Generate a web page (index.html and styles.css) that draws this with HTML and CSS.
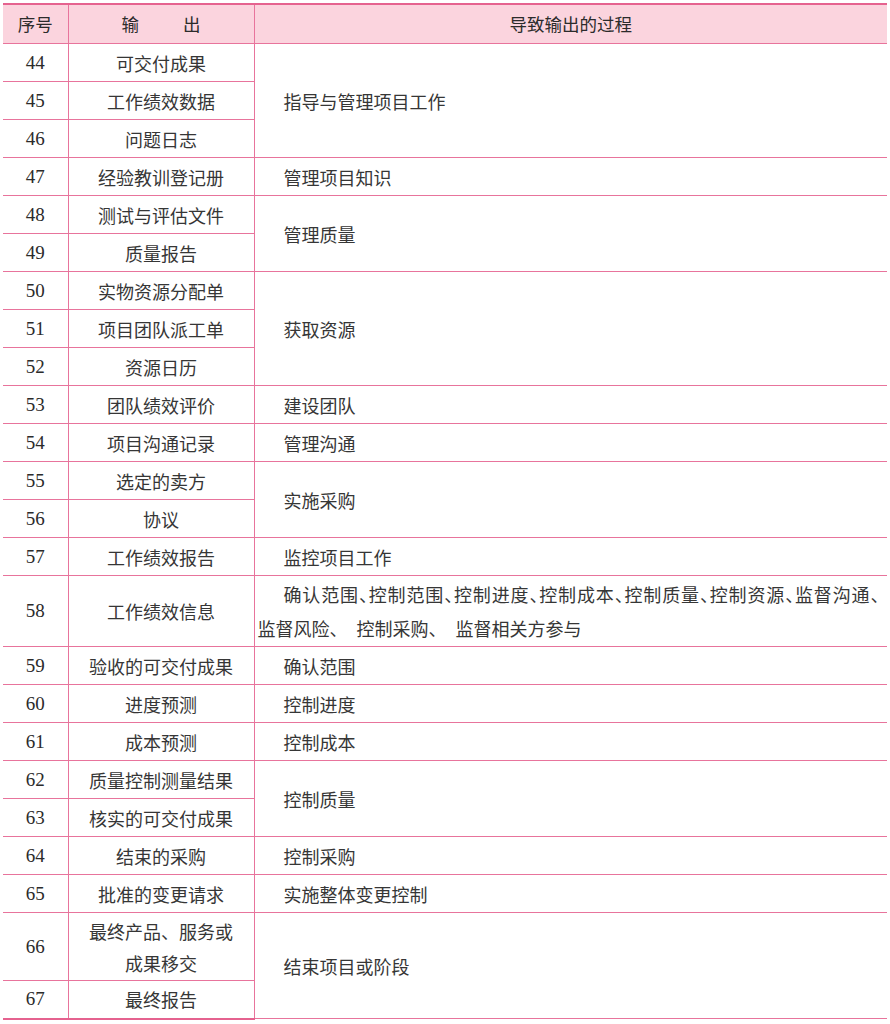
FILE: index.html
```html
<!DOCTYPE html>
<html lang="zh-CN">
<head>
<meta charset="utf-8">
<title>输出与过程</title>
<link rel="stylesheet" href="styles.css">
</head>
<body>
<table class="tbl">
  <colgroup>
    <col class="c1"><col class="c2"><col class="c3">
  </colgroup>
  <thead>
    <tr class="head">
      <th class="num-h">序号</th>
      <th><span class="sp">输</span>出</th>
      <th>导致输出的过程</th>
    </tr>
  </thead>
  <tbody>
    <tr><td class="n">44</td><td class="o">可交付成果</td><td class="p" rowspan="3">指导与管理项目工作</td></tr>
    <tr><td class="n">45</td><td class="o">工作绩效数据</td></tr>
    <tr><td class="n">46</td><td class="o">问题日志</td></tr>
    <tr><td class="n">47</td><td class="o">经验教训登记册</td><td class="p">管理项目知识</td></tr>
    <tr><td class="n">48</td><td class="o">测试与评估文件</td><td class="p" rowspan="2">管理质量</td></tr>
    <tr><td class="n">49</td><td class="o">质量报告</td></tr>
    <tr><td class="n">50</td><td class="o">实物资源分配单</td><td class="p" rowspan="3">获取资源</td></tr>
    <tr><td class="n">51</td><td class="o">项目团队派工单</td></tr>
    <tr><td class="n">52</td><td class="o">资源日历</td></tr>
    <tr><td class="n">53</td><td class="o">团队绩效评价</td><td class="p">建设团队</td></tr>
    <tr><td class="n">54</td><td class="o">项目沟通记录</td><td class="p">管理沟通</td></tr>
    <tr><td class="n">55</td><td class="o">选定的卖方</td><td class="p" rowspan="2">实施采购</td></tr>
    <tr><td class="n">56</td><td class="o">协议</td></tr>
    <tr><td class="n">57</td><td class="o">工作绩效报告</td><td class="p">监控项目工作</td></tr>
    <tr class="tall"><td class="n">58</td><td class="o">工作绩效信息</td><td class="p multi"><span class="halt">确认范围、控制范围、控制进度、控制成本、控制质量、控制资源、监督沟通</span>、<br>监督风险、&#8194;控制采购、&#8194;监督相关方参与</td></tr>
    <tr><td class="n">59</td><td class="o">验收的可交付成果</td><td class="p">确认范围</td></tr>
    <tr><td class="n">60</td><td class="o">进度预测</td><td class="p">控制进度</td></tr>
    <tr><td class="n">61</td><td class="o">成本预测</td><td class="p">控制成本</td></tr>
    <tr><td class="n">62</td><td class="o">质量控制测量结果</td><td class="p" rowspan="2">控制质量</td></tr>
    <tr><td class="n">63</td><td class="o">核实的可交付成果</td></tr>
    <tr><td class="n">64</td><td class="o">结束的采购</td><td class="p">控制采购</td></tr>
    <tr><td class="n">65</td><td class="o">批准的变更请求</td><td class="p">实施整体变更控制</td></tr>
    <tr class="tall2"><td class="n">66</td><td class="o two">最终产品、服务或<br>成果移交</td><td class="p" rowspan="2">结束项目或阶段</td></tr>
    <tr class="last"><td class="n">67</td><td class="o">最终报告</td></tr>
  </tbody>
</table>
</body>
</html>
```

FILE: styles.css
```css
html, body {
  margin: 0;
  padding: 0;
  background: #ffffff;
}

body {
  padding: 3px 3px 0 3px;
  font-family: "Noto Sans CJK SC", "Noto Sans", sans-serif;
  color: #363636;
}

.tbl {
  width: 884px;
  border-collapse: collapse;
  table-layout: fixed;
}

.c1 { width: 65px; }
.c2 { width: 186px; }
.c3 { width: 633px; }

.tbl th,
.tbl td {
  padding: 0;
  border-top: 1px solid #e8749c;
  border-bottom: 1px solid #e8749c;
  border-left: 1px solid #e8749c;
  vertical-align: middle;
  font-weight: 400;
  font-size: 18px;
  line-height: 22px;
}

.tbl th:first-child,
.tbl td:first-child {
  border-left: none;
}

.tbl .head th {
  height: 38px;
  background: #fbd4de;
  border-top: 2px solid #e5628f;
  color: #2b2b2b;
  text-align: center;
  font-size: 17.5px;
}

.sp {
  margin-right: 44px;
}

.tbl tbody tr {
  height: 38px;
}

.tbl tbody tr.tall {
  height: 71px;
}

.tbl tbody tr.tall2 {
  height: 68px;
}

.tbl tbody tr.last td {
  border-bottom: 2px solid #e5628f;
}

.tbl td.n {
  text-align: center;
  font-family: "Liberation Serif", "Times New Roman", serif;
  font-size: 19px;
  color: #2b2b2b;
}

.tbl td.o {
  text-align: center;
}

.tbl td.two {
  line-height: 32px;
}

.tbl td.p {
  text-align: left;
  padding-left: 3px;
  text-indent: 26px;
}

.tbl td.multi {
  line-height: 34px;
  white-space: nowrap;
}

.halt {
  font-feature-settings: "halt" 1;
  letter-spacing: 0.85px;
}
```
